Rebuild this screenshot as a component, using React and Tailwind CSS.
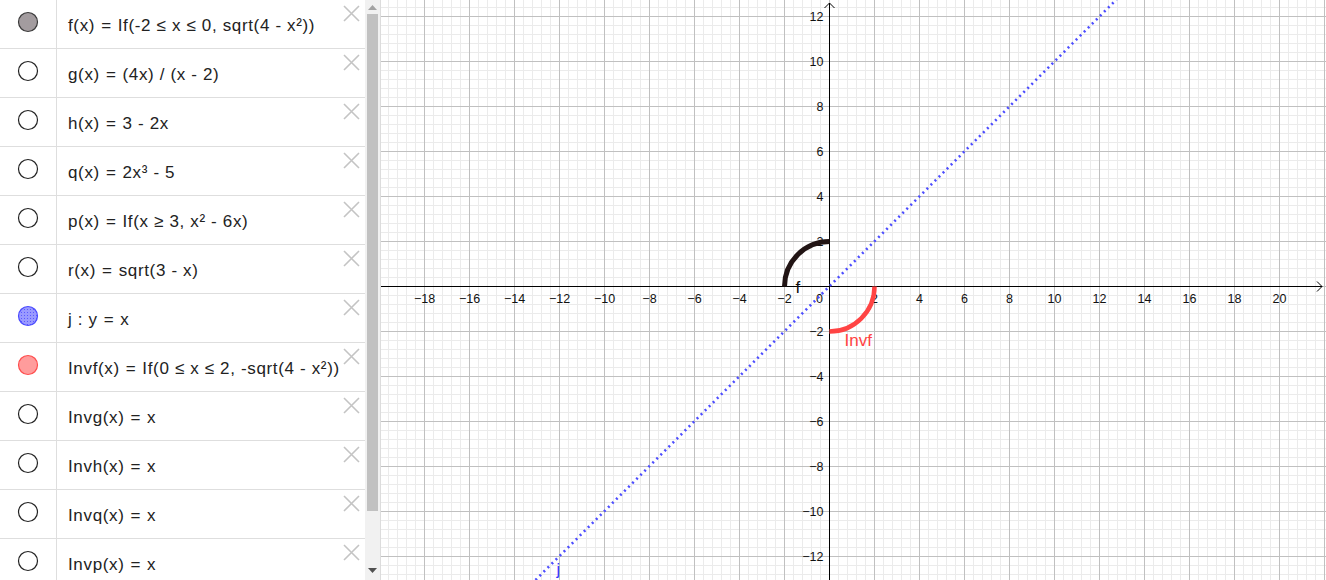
import React from 'react';

const rows = [
  { text: 'f(x) = If(-2 ≤ x ≤ 0, sqrt(4 - x²))', fill: '#a39c9f', stroke: '#3a3a3a' },
  { text: 'g(x) = (4x) / (x - 2)' },
  { text: 'h(x) = 3 - 2x' },
  { text: 'q(x) = 2x³ - 5' },
  { text: 'p(x) = If(x ≥ 3, x² - 6x)' },
  { text: 'r(x) = sqrt(3 - x)' },
  { text: 'j : y = x', fill: '#8c8cff', stroke: '#4a4aff', dotted: true },
  { text: 'Invf(x) = If(0 ≤ x ≤ 2, -sqrt(4 - x²))', fill: '#ff9c9c', stroke: '#ff4d4d' },
  { text: 'Invg(x) = x' },
  { text: 'Invh(x) = x' },
  { text: 'Invq(x) = x' },
  { text: 'Invp(x) = x' },
];

const Marble = ({ fill = '#ffffff', stroke = '#222', dotted }) => (
  <svg width="22" height="22" viewBox="0 0 22 22">
    <defs>
      <pattern id="dots" width="3" height="3" patternUnits="userSpaceOnUse">
        <rect width="3" height="3" fill="#9a9aff" />
        <rect x="1" y="1" width="1" height="1" fill="#5a5aff" />
      </pattern>
    </defs>
    <circle cx="11" cy="11" r="9.5" fill={dotted ? 'url(#dots)' : fill} stroke={stroke} strokeWidth="1.2" />
  </svg>
);

const CloseX = () => (
  <svg width="17" height="17" viewBox="0 0 17 17">
    <path d="M1 1 L16 16 M16 1 L1 16" stroke="#c4c4c4" strokeWidth="1.6" />
  </svg>
);

// the " = " in the algebra view is set a bit wider than a plain space
const Formula = ({ text }) => {
  const parts = text.split(' = ');
  return (
    <span>
      {parts.map((p, i) => (
        <React.Fragment key={i}>
          {i > 0 && <span className="mx-[6px]">=</span>}
          {p}
        </React.Fragment>
      ))}
    </span>
  );
};

const Row = ({ row }) => (
  <div className="flex h-[49px] shrink-0 border-b border-[#dedede]">
    <div className="w-[57px] shrink-0 border-r border-[#dedede] flex justify-center pt-[11px]">
      <Marble fill={row.fill} stroke={row.stroke} dotted={row.dotted} />
    </div>
    <div className="relative flex-1 pl-[11px] pt-[15px] text-[17px] leading-[22px] tracking-[0.65px] text-[#222] whitespace-nowrap">
      <Formula text={row.text} />
      <div className="absolute top-[5px] right-[5px]">
        <CloseX />
      </div>
    </div>
  </div>
);

const Triangle = ({ down }) => (
  <svg width="9" height="6" viewBox="0 0 9 6">
    <path d={down ? 'M0 0 L9 0 L4.5 5 Z' : 'M0 5 L9 5 L4.5 0 Z'} fill={down ? '#505050' : '#a3a3a3'} />
  </svg>
);

const W = 945;
const H = 580;
const OX = 448.5;
const OY = 286.5;
const U = 22.5;

const Graph = () => {
  const minorV = [];
  const majorV = [];
  for (let k = -60; k <= 60; k++) {
    const x = OX + k * 9;
    if (x < 0 || x > W) continue;
    (k % 5 === 0 ? majorV : minorV).push(x);
  }
  const minorH = [];
  const majorH = [];
  for (let k = -40; k <= 40; k++) {
    const y = OY + k * 9;
    if (y < 0 || y > H) continue;
    (k % 5 === 0 ? majorH : minorH).push(y);
  }
  const xLabels = [];
  for (let v = -18; v <= 20; v += 2) if (v !== 0) xLabels.push(v);
  const yLabels = [];
  for (let v = -12; v <= 12; v += 2) if (v !== 0) yLabels.push(v);
  const fmt = (v) => (v < 0 ? '\u2212' + Math.abs(v) : String(v));

  return (
    <svg width={W} height={H} viewBox={`0 0 ${W} ${H}`} className="block">
      <g shapeRendering="crispEdges">
        {minorV.map((x) => <line key={'mv' + x} x1={x} y1={0} x2={x} y2={H} stroke="#ebebeb" strokeWidth="1" />)}
        {minorH.map((y) => <line key={'mh' + y} x1={0} y1={y} x2={W} y2={y} stroke="#ebebeb" strokeWidth="1" />)}
        {majorV.map((x) => <line key={'Mv' + x} x1={x} y1={0} x2={x} y2={H} stroke="#c0c0c0" strokeWidth="1" />)}
        {majorH.map((y) => <line key={'Mh' + y} x1={0} y1={y} x2={W} y2={y} stroke="#c0c0c0" strokeWidth="1" />)}
        <line x1={0} y1={OY} x2={W - 4} y2={OY} stroke="#000" strokeWidth="1" />
        <line x1={OX} y1={3} x2={OX} y2={H} stroke="#000" strokeWidth="1" />
      </g>
      <path d={`M${W - 9} ${OY - 5} L${W - 4} ${OY} L${W - 9} ${OY + 5}`} fill="none" stroke="#000" strokeWidth="1" />
      <path d={`M${OX - 5} 8 L${OX} 3 L${OX + 5} 8`} fill="none" stroke="#000" strokeWidth="1" />

      <g fontFamily="'Liberation Sans', Arial, sans-serif" fontSize="12.5" fill="#111">
        {xLabels.map((v) => (
          <text key={'xl' + v} x={OX + v * U} y={OY + 16} textAnchor="middle">{fmt(v)}</text>
        ))}
        <text x={OX - 10} y={OY + 16} textAnchor="middle">0</text>
        {yLabels.map((v) => (
          <text key={'yl' + v} x={OX - 6} y={OY - v * U + 4.5} textAnchor="end">{fmt(v)}</text>
        ))}
      </g>

      <line
        x1={OX - 294}
        y1={H}
        x2={OX + 287}
        y2={-0.5}
        stroke="#4d4dff"
        strokeWidth="2.6"
        strokeDasharray="2 3.7"
      />
      <path
        d={`M${OX - 2 * U} ${OY} A ${2 * U} ${2 * U} 0 0 1 ${OX} ${OY - 2 * U}`}
        fill="none"
        stroke="#211414"
        strokeWidth="5"
      />
      <path
        d={`M${OX} ${OY + 2 * U} A ${2 * U} ${2 * U} 0 0 0 ${OX + 2 * U} ${OY}`}
        fill="none"
        stroke="#ff4444"
        strokeWidth="4.5"
      />
      <g fontFamily="'Liberation Sans', Arial, sans-serif">
        <text x={OX - 34} y={OY + 6} fontSize="17" fill="#111">f</text>
        <text x={OX + 15} y={OY + 59} fontSize="17" fill="#ff4444">Invf</text>
        <text x={OX - 273} y={H - 5} fontSize="16" fill="#3333ff">j</text>
      </g>
    </svg>
  );
};

export default function App() {
  return (
    <div className="flex h-[580px] w-[1326px] overflow-hidden bg-white" style={{ fontFamily: "'Liberation Sans', Arial, sans-serif" }}>
      <div className="flex w-[381px] shrink-0 border-r border-[#dcdcdc]">
        <div className="flex w-[365px] flex-col overflow-hidden">
          {rows.map((r) => <Row key={r.text} row={r} />)}
        </div>
        <div className="flex w-[15px] flex-col bg-[#f1f1f1]">
          <div className="flex h-[14px] items-center justify-center pt-[2px]">
            <Triangle />
          </div>
          <div className="mx-[2px] h-[497px] bg-[#c1c1c1]" />
          <div className="flex-1" />
          <div className="flex h-[16px] items-center justify-center pb-[2px]">
            <Triangle down />
          </div>
        </div>
      </div>
      <div className="flex-1 overflow-hidden">
        <Graph />
      </div>
    </div>
  );
}
